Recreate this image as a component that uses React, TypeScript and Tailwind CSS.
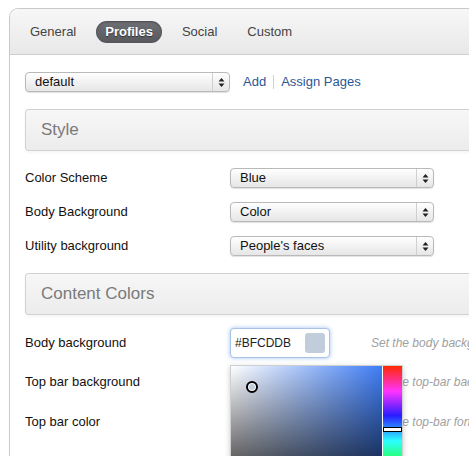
import React from "react";

const font = { fontFamily: '"Liberation Sans", Arial, sans-serif' };

const SelectBox = ({ value, width }: { value: string; width: string }) => (
  <div
    className={`flex h-[20px] items-stretch rounded-[4px] border border-[#b9b9b9] bg-gradient-to-b from-[#ffffff] via-[#f2f2f2] to-[#e6e6e6] shadow-[0_1px_1px_rgba(0,0,0,0.12)] ${width}`}
  >
    <div className="flex flex-1 items-center pl-[9px] text-[13px] text-[#111]">{value}</div>
    <div className="flex w-[17px] items-center justify-center border-l border-[#cfcfcf]">
      <svg width="7" height="11" viewBox="0 0 7 11">
        <path d="M3.5 1 L6.5 4.5 H0.5 Z" fill="#222" />
        <path d="M3.5 10 L6.5 6.5 H0.5 Z" fill="#222" />
      </svg>
    </div>
  </div>
);

const SectionHeader = ({ title }: { title: string }) => (
  <div className="flex h-[42px] items-center rounded-[3px] border border-[#d2d2d2] bg-gradient-to-b from-[#f7f7f7] to-[#ececec] pl-[15px] text-[17px] text-[#7a7a7a] shadow-[0_2px_3px_rgba(0,0,0,0.04)]">
    {title}
  </div>
);

const Row = ({ label, children }: { label: string; children: React.ReactNode }) => (
  <div className="flex h-[34px] items-center">
    <div className="w-[205px] text-[13px] text-[#111]">{label}</div>
    {children}
  </div>
);

// hints run off the right edge, same as the screenshot
const Hint = ({ text }: { text: string }) => (
  <div className="ml-[41px] whitespace-nowrap text-[12px] italic text-[#a0a0a0]">{text}</div>
);

export default function App() {
  return (
    <div className="h-[456px] w-[469px] overflow-hidden bg-white" style={font}>
      <div className="ml-[9px] mt-[8px] h-[600px] w-[640px] rounded-tl-[9px] border border-[#c9c9c9]">
        {/* Tabs */}
        <div className="flex h-[46px] items-center gap-[10px] rounded-tl-[9px] border-b border-[#cfcfcf] bg-gradient-to-b from-[#f7f7f7] to-[#e8e8e8] pl-[10px]">
          <div className="px-[10px] text-[13px] text-[#444]">General</div>
          <div className="flex h-[22px] items-center rounded-full bg-gradient-to-b from-[#6e7075] to-[#56585c] px-[9px] text-[13px] font-bold text-white shadow-[inset_0_1px_2px_rgba(0,0,0,0.35)] [text-shadow:0_1px_1px_rgba(0,0,0,0.5)]">
            Profiles
          </div>
          <div className="px-[10px] text-[13px] text-[#444]">Social</div>
          <div className="px-[10px] text-[13px] text-[#444]">Custom</div>
        </div>

        <div className="px-[15px] pt-[17px]">
          <div className="flex items-center">
            <SelectBox value="default" width="w-[205px]" />
            <a className="ml-[13px] text-[13px] text-[#2b5796]">Add</a>
            <span className="mx-[7px] h-[14px] w-px bg-[#d0d0d0]" />
            <a className="text-[13px] text-[#2b5796]">Assign Pages</a>
          </div>

          <div className="mt-[17px]">
            <SectionHeader title="Style" />
          </div>

          <div className="mt-[10px]">
            <Row label="Color Scheme">
              <SelectBox value="Blue" width="w-[204px]" />
            </Row>
            <Row label="Body Background">
              <SelectBox value="Color" width="w-[204px]" />
            </Row>
            <Row label="Utility background">
              <SelectBox value="People's faces" width="w-[204px]" />
            </Row>
          </div>

          <div className="mt-[10px]">
            <SectionHeader title="Content Colors" />
          </div>

          <div className="mt-[12px]">
            <div className="flex h-[32px] items-center">
              <div className="w-[205px] text-[13px] text-[#111]">Body background</div>
              <div className="relative">
                <div className="flex h-[30px] w-[100px] items-center justify-between rounded-[4px] border border-[#a9c3e6] bg-white pl-[4px] pr-[4px] shadow-[0_0_4px_rgba(80,140,230,0.55)]">
                  <span className="text-[12px] text-[#222]">#BFCDDB</span>
                  <span className="h-[20px] w-[20px] rounded-[3px] bg-[#c2cddb]" />
                </div>
                {/* Color picker popup */}
                <div className="absolute left-0 top-[37px] z-10 flex border border-[#cfcfcf] bg-white shadow-[0_2px_6px_rgba(0,0,0,0.2)]">
                  <div className="relative h-[150px] w-[151px] bg-[#3f7df5]">
                    <div className="absolute inset-0 bg-gradient-to-r from-white to-transparent" />
                    <div className="absolute inset-0 bg-gradient-to-b from-transparent to-black" />
                    <div className="absolute left-[15px] top-[15px] h-[12px] w-[12px] rounded-full border-2 border-black bg-[#c2cddb] shadow-[inset_0_0_0_1px_white]" />
                  </div>
                  <div className="relative h-[150px] w-[20px] border-l border-white bg-[linear-gradient(to_bottom,#ff2a00_0%,#ff33ff_17%,#2a1cff_33%,#2affff_50%,#2aff2a_67%,#ffff2a_83%,#ff2a00_100%)]">
                    <div className="absolute left-0 top-[61px] h-[5px] w-full border border-black bg-white" />
                  </div>
                </div>
              </div>
              <Hint text="Set the body background color" />
            </div>
            <div className="mt-[6px] flex h-[34px] items-center">
              <div className="w-[205px] text-[13px] text-[#111]">Top bar background</div>
              <div className="w-[100px]" />
              <Hint text="Set the top-bar background color" />
            </div>
            <div className="mt-[6px] flex h-[34px] items-center">
              <div className="w-[205px] text-[13px] text-[#111]">Top bar color</div>
              <div className="w-[100px]" />
              <Hint text="Set the top-bar font color" />
            </div>
          </div>
        </div>
      </div>
    </div>
  );
}
